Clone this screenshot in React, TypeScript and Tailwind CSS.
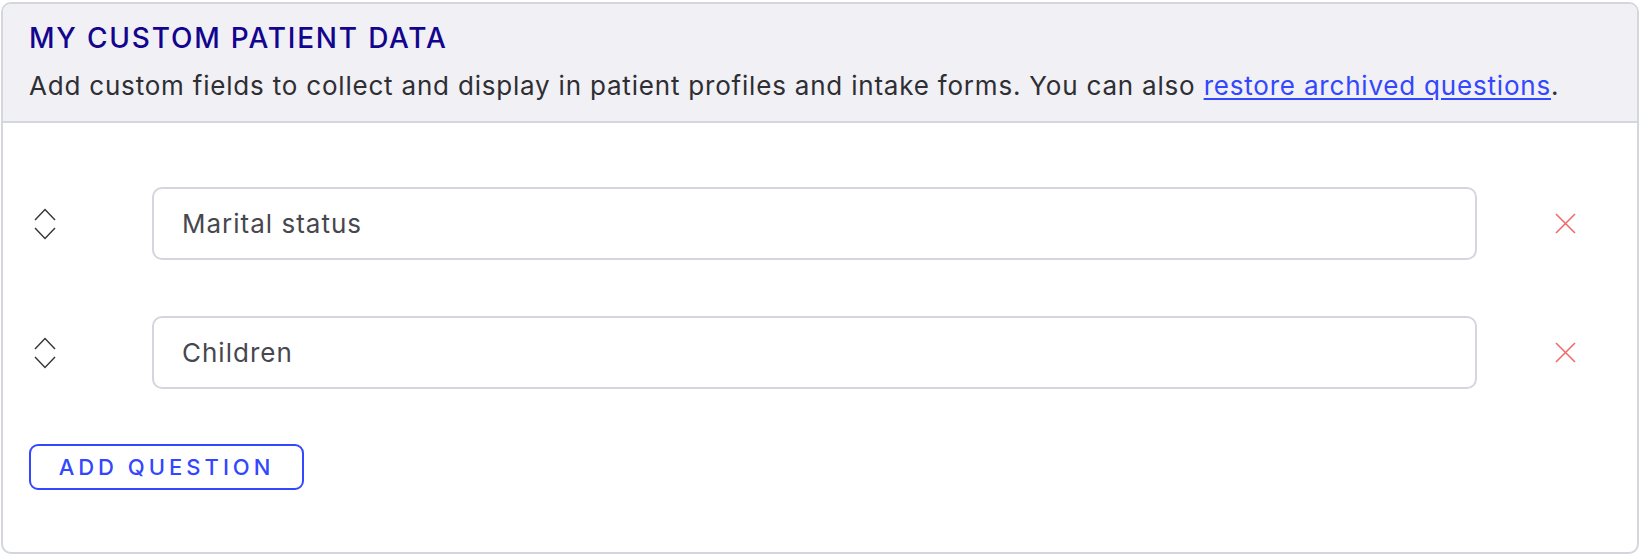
const QUESTIONS = ['Marital status', 'Children']

export default function App() {
  return (
    <div className="bg-white pl-[1px] pr-[3px] pt-[2px] pb-[3px]" style={{ fontFamily: 'Inter, "Noto Sans", sans-serif' }}>
      <div className="rounded-[10px] border-2 border-[#d3d6dc] overflow-hidden">
        {/* Header */}
        <div className="bg-[#f0f0f5] border-b-2 border-[#d3d6dc] pl-[26px] pt-[18px] pb-[17px]">
          <h2 className="text-[28px] leading-[32px] font-medium tracking-[1.8px] text-[#14058f]">MY CUSTOM PATIENT DATA</h2>
          <p className="mt-[14px] text-[26px] leading-[36px] tracking-[0.8px] text-[#2e2e33]">
            Add custom fields to collect and display in patient profiles and intake forms. You can also{' '}
            <a href="#" className="text-[#3347ff] underline underline-offset-[3px]">restore archived questions</a>.
          </p>
        </div>

        {/* Body */}
        <div className="pl-[26px] pt-[64px] pb-[62px]">
          <div className="flex flex-col gap-[56px]">
            {QUESTIONS.map((q) => (
              <QuestionRow key={q} label={q} />
            ))}
          </div>
          <button
            type="button"
            className="mt-[55px] h-[46px] w-[275px] rounded-[9px] border-2 border-[#3347ff] text-[22px] font-medium tracking-[4px] text-[#3347ff]"
          >
            ADD QUESTION
          </button>
        </div>
      </div>
    </div>
  )
}

function QuestionRow({ label }: { label: string }) {
  return (
    <div className="flex items-center">
      <div className="w-[123px] pl-[5px]">
        <SortIcon />
      </div>
      <input
        readOnly
        value={label}
        className="flex-1 h-[73px] rounded-[10px] border-2 border-[#d3d6dc] bg-white pl-[28px] text-[26px] tracking-[1px] text-[#47474f] outline-none"
      />
      <div className="w-[160px] pl-[78px]">
        <svg width="21" height="21" viewBox="0 0 21 21" fill="none" stroke="#f06a6a" strokeWidth="1.6">
          <path d="M1 1L20 20M20 1L1 20" />
        </svg>
      </div>
    </div>
  )
}

function SortIcon() {
  return (
    <svg width="22" height="32" viewBox="0 0 22 32" fill="none" stroke="#33333a" strokeWidth="1.4">
      <path d="M1 12L11 1.5L21 12" />
      <path d="M1 20L11 30.5L21 20" />
    </svg>
  )
}
